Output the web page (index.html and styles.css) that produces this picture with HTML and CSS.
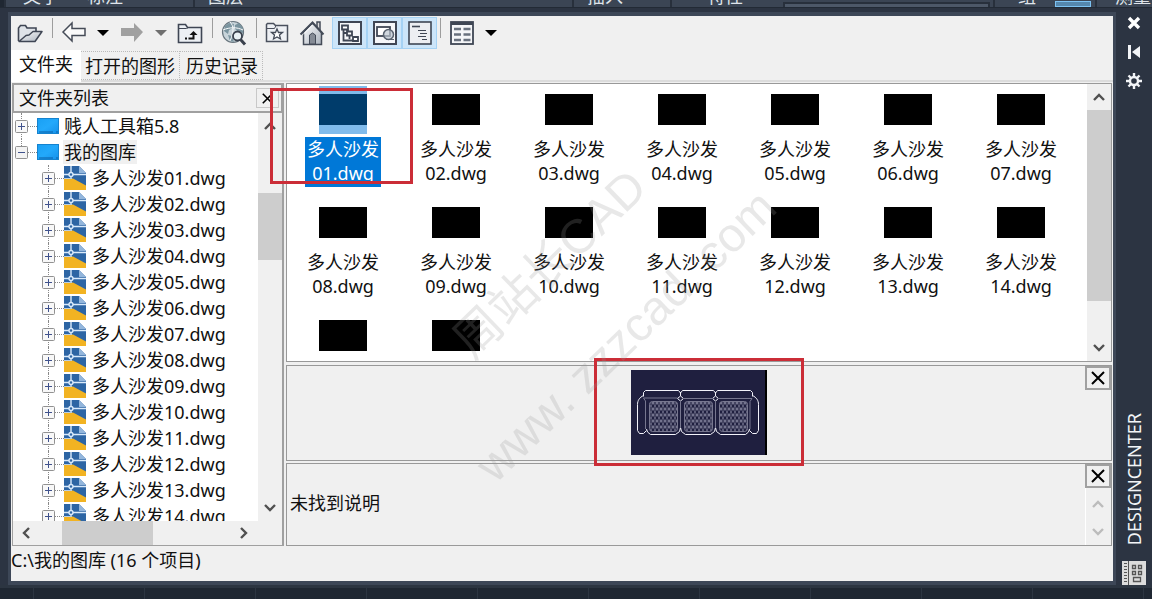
FILE: index.html
```html
<!DOCTYPE html>
<html lang="zh-CN">
<head>
<meta charset="utf-8">
<title>DESIGNCENTER</title>
<link rel="stylesheet" href="styles.css">
</head>
<body>
<svg class="defs" aria-hidden="true">
  <defs>
    <linearGradient id="blue" x1="0" y1="0" x2="1" y2="1"><stop offset="0" stop-color="#1aa0f4"/><stop offset=".5" stop-color="#23a9fb"/><stop offset="1" stop-color="#1591ea"/></linearGradient>
    <linearGradient id="metal" x1="0" y1="0" x2="1" y2="1"><stop offset="0" stop-color="#ffffff"/><stop offset="1" stop-color="#a9b1bc"/></linearGradient>
    <pattern id="hatch" width="4" height="6" patternUnits="userSpaceOnUse"><path d="M0 0L4 6M4 0L0 6M0 3H4" stroke="#9a9ab2" stroke-width=".6" fill="none"/></pattern>
    <symbol id="i-folder" viewBox="0 0 22 16"><rect x=".5" y=".5" width="21" height="15" fill="url(#blue)" stroke="#1583cf"/><path d="M2 14h14M19 14h2" stroke="#0b5fa5"/></symbol>
    <symbol id="i-dwg" viewBox="0 0 22 24"><path d="M0 0h15l7 7v17H0z" fill="#2d65a4"/><path d="M15 0v7h7z" fill="#93b6dc"/><path d="M0 12.500l9 0 13 7V24H0z" fill="#f2b322"/><path d="M7 0v12M0 8.500h22" stroke="#d9eafb" stroke-width="1.400" fill="none"/><path d="M0 12.500h8" stroke="#b9cfe4"/><circle cx="7" cy="8.500" r="2" fill="#2d65a4" stroke="#d9eafb" stroke-width="1.400"/></symbol>
    <symbol id="i-plus" viewBox="0 0 13 13"><rect x=".5" y=".5" width="12" height="12" rx="1" fill="#f8f8f8" stroke="#919191"/><path d="M3 6.500h7M6.500 3v7" stroke="#40528c"/></symbol>
    <symbol id="i-minus" viewBox="0 0 13 13"><rect x=".5" y=".5" width="12" height="12" rx="1" fill="#f3f3f3" stroke="#919191"/><path d="M3 6.500h7" stroke="#40528c"/></symbol>
    <symbol id="i-up" viewBox="0 0 12 8"><path d="M1 7l5-5 5 5" fill="none" stroke="currentColor" stroke-width="2.400"/></symbol>
    <symbol id="i-down" viewBox="0 0 12 8"><path d="M1 1l5 5 5-5" fill="none" stroke="currentColor" stroke-width="2.400"/></symbol>
    <symbol id="i-left" viewBox="0 0 8 12"><path d="M7 1L2 6l5 5" fill="none" stroke="currentColor" stroke-width="2.400"/></symbol>
    <symbol id="i-right" viewBox="0 0 8 12"><path d="M1 1l5 5-5 5" fill="none" stroke="currentColor" stroke-width="2.400"/></symbol>
    <symbol id="i-x" viewBox="0 0 14 14"><path d="M1 1l12 12M13 1L1 13" fill="none" stroke="currentColor" stroke-width="2"/></symbol>
    <symbol id="i-caret" viewBox="0 0 12 6"><path d="M0 0h12L6 6z" fill="currentColor"/></symbol>
  </defs>
</svg>

<header class="ribbon">
  <div class="rg rg-annotate"><span>文字</span><span>标注</span></div>
  <div class="rg rg-layer"><span>图层</span></div>
  <div class="rg rg-insert"><span>插入</span></div>
  <div class="rg rg-props"><span>特性</span><i class="combo"></i></div>
  <div class="rg rg-group"><span>组</span><i class="active-tool"></i></div>
  <div class="rg rg-measure"><span>测量</span></div>
</header>

<div class="palette">
  <main class="window">
    <div class="toolbar" role="toolbar">
      <button class="tool" aria-label="加载"><svg width="26" height="26" viewBox="0 0 26 26"><path d="M1.500 21V8l2-2.500h5L10 8h9v4" fill="#dfe3e8" stroke="#3f4654" stroke-width="1.600"/><path d="M2 21.500l7-6 3-.5 4-3.500h9L18 21.500z" fill="url(#metal)" stroke="#3f4654" stroke-width="1.500" stroke-linejoin="round"/></svg></button>
      <i class="sep"></i>
      <button class="tool" aria-label="上一页"><svg width="26" height="26" viewBox="0 0 26 26"><path d="M2 12l9-9v5.500h13v7H11V21z" fill="#fafafa" stroke="#454b57" stroke-width="1.500"/></svg></button>
      <button class="drop" aria-label="后退列表"><svg width="12" height="6"><use href="#i-caret"/></svg></button>
      <button class="tool" aria-label="下一页"><svg width="26" height="26" viewBox="0 0 26 26"><path d="M24 12l-9-9v5H2v8h13v6z" fill="#a0a0a0"/></svg></button>
      <button class="drop muted" aria-label="前进列表"><svg width="12" height="6"><use href="#i-caret"/></svg></button>
      <button class="tool" aria-label="上一级"><svg width="26" height="26" viewBox="0 0 26 26"><path d="M1.500 22.500V4.500h7l2 3h14v15z" fill="#edf0f4" stroke="#3f4654" stroke-width="1.600"/><path d="M1.500 8.500h8l2-1" fill="none" stroke="#3f4654"/><path d="M8 18.500h2M11.500 18.500h5v-4" stroke="#111" stroke-width="2" fill="none"/><path d="M12.500 15l4-4 4 4z" fill="#111"/></svg></button>
      <i class="sep"></i>
      <button class="tool" aria-label="搜索"><svg width="26" height="26" viewBox="0 0 26 26"><circle cx="12" cy="12" r="10.500" fill="#c8d4da" stroke="#68757e" stroke-width="1.200"/><path d="M4 6l4-3 5 1-1 4-4 2-1 4-4-3zM14 5l4-2 4 5 0 5-4-1-4-3zM7 15l4 1 2 6-4-1z" fill="#7a949f"/><path d="M9 2c4 4 4 10 0 19M2 10c7-3 14-3 20 0" fill="none" stroke="#f8fafb"/><circle cx="16.500" cy="16" r="4.500" fill="#e9f1f4" stroke="#3a414d" stroke-width="1.800"/><path d="M19.500 19.500l4.500 5" stroke="#3a414d" stroke-width="3"/></svg></button>
      <i class="sep"></i>
      <button class="tool tool-fav" aria-label="收藏夹"><svg width="26" height="26" viewBox="0 0 26 26"><path d="M2.500 21.500v-17l1-1h6l2 2h12v16z" fill="#eef0f4" stroke="#4a505d" stroke-width="1.500"/><path d="M2.500 8.500h8l1.500-3" fill="none" stroke="#4a505d"/><path d="M13 9l1.500 3.500h4L15.500 15l1 4-3.500-2-3.500 2 1-4-3-2.500h4z" fill="#fff" stroke="#444b58" stroke-width="1.300"/></svg></button>
      <button class="tool tool-home" aria-label="主页"><svg width="26" height="26" viewBox="0 0 26 26"><path d="M18 7V2h3v8" fill="#ddd" stroke="#444b58" stroke-width="1.500"/><path d="M4.500 12v12.500h18V12l-9-9z" fill="url(#metal)" stroke="#444b58" stroke-width="1.500"/><path d="M1.500 14.500L13.500 2.500l11 12" fill="none" stroke="#444b58" stroke-width="2"/><path d="M13.500 5L4 14.500" stroke="#fff"/><path d="M10.500 24v-9l3-2 3 2v9z" fill="#858b95" stroke="#444b58"/></svg></button>
      <button class="toggle" aria-pressed="true" aria-label="树状图切换"><svg width="24" height="24" viewBox="0 0 24 24"><rect x="1" y="1" width="22" height="22" fill="#f5f6f8" stroke="#3f4654" stroke-width="2"/><path d="M5.500 8v11.500h10M5.500 12h4M11.500 14v4" fill="none" stroke="#3f4654" stroke-width="1.800"/><path d="M4 4.500h6v4H4zM9 10.500h5v4H9zM15 16h5v4h-5z" fill="#fff" stroke="#3f4654" stroke-width="1.800"/></svg></button>
      <button class="toggle" aria-pressed="true" aria-label="预览"><svg width="24" height="24" viewBox="0 0 24 24"><rect x="1" y="1" width="22" height="22" fill="#f5f6f8" stroke="#3f4654" stroke-width="2"/><rect x="4" y="6" width="13" height="9" fill="#fff" stroke="#3f4654" stroke-width="1.800"/><circle cx="15.500" cy="13.500" r="5" fill="#bdc8d2" fill-opacity=".7" stroke="#57616e" stroke-width="1.500"/><path d="M13 18.500h8" stroke="#57616e"/></svg></button>
      <button class="toggle" aria-pressed="true" aria-label="说明"><svg width="24" height="24" viewBox="0 0 24 24"><rect x="1" y="1" width="22" height="22" fill="#eceef2" stroke="#3f4654" stroke-width="1.600"/><path d="M4 5.500h8" stroke="#3f4654" stroke-width="1.600"/><path d="M10 9.500h8M12 12.500h7M10 15.500h8M14 18.500h5" stroke="#3f4654" stroke-width="1.200"/></svg></button>
      <i class="sep"></i>
      <button class="tool" aria-label="视图"><svg width="24" height="24" viewBox="0 0 24 24"><rect x="1" y="1" width="22" height="22" fill="#f5f6f8" stroke="#3f4654" stroke-width="1.800"/><path d="M1 2.500h22" stroke="#3f4654" stroke-width="3"/><path d="M4 8h7M13.500 8h7M4 13.500h7M13.500 13.500h7M4 19h7M13.500 19h7" stroke="#69717e" stroke-width="2.400"/></svg></button>
      <button class="drop" aria-label="视图列表"><svg width="12" height="6"><use href="#i-caret"/></svg></button>
    </div>

    <div class="tabs" role="tablist">
      <button class="tab current" role="tab" aria-selected="true">文件夹</button>
      <button class="tab" role="tab">打开的图形</button>
      <button class="tab" role="tab">历史记录</button>
    </div>

    <div class="panes">
      <section class="folders">
        <div class="folders-head"><h2>文件夹列表</h2><button class="close small" aria-label="关闭"><svg width="11" height="11"><use href="#i-x"/></svg></button></div>
        <div class="folders-body">
          <ul class="tree" role="tree">
            <li class="root first"><svg class="box" width="13" height="13"><use href="#i-plus"/></svg><svg width="22" height="16"><use href="#i-folder"/></svg><span>贱人工具箱5.8</span></li>
            <li class="root"><svg class="box" width="13" height="13"><use href="#i-minus"/></svg><svg width="22" height="16"><use href="#i-folder"/></svg><span class="chosen">我的图库</span></li>
            <li class="leaf"><svg class="box" width="13" height="13"><use href="#i-plus"/></svg><svg width="22" height="24"><use href="#i-dwg"/></svg><span>多人沙发01.dwg</span></li>
            <li class="leaf"><svg class="box" width="13" height="13"><use href="#i-plus"/></svg><svg width="22" height="24"><use href="#i-dwg"/></svg><span>多人沙发02.dwg</span></li>
            <li class="leaf"><svg class="box" width="13" height="13"><use href="#i-plus"/></svg><svg width="22" height="24"><use href="#i-dwg"/></svg><span>多人沙发03.dwg</span></li>
            <li class="leaf"><svg class="box" width="13" height="13"><use href="#i-plus"/></svg><svg width="22" height="24"><use href="#i-dwg"/></svg><span>多人沙发04.dwg</span></li>
            <li class="leaf"><svg class="box" width="13" height="13"><use href="#i-plus"/></svg><svg width="22" height="24"><use href="#i-dwg"/></svg><span>多人沙发05.dwg</span></li>
            <li class="leaf"><svg class="box" width="13" height="13"><use href="#i-plus"/></svg><svg width="22" height="24"><use href="#i-dwg"/></svg><span>多人沙发06.dwg</span></li>
            <li class="leaf"><svg class="box" width="13" height="13"><use href="#i-plus"/></svg><svg width="22" height="24"><use href="#i-dwg"/></svg><span>多人沙发07.dwg</span></li>
            <li class="leaf"><svg class="box" width="13" height="13"><use href="#i-plus"/></svg><svg width="22" height="24"><use href="#i-dwg"/></svg><span>多人沙发08.dwg</span></li>
            <li class="leaf"><svg class="box" width="13" height="13"><use href="#i-plus"/></svg><svg width="22" height="24"><use href="#i-dwg"/></svg><span>多人沙发09.dwg</span></li>
            <li class="leaf"><svg class="box" width="13" height="13"><use href="#i-plus"/></svg><svg width="22" height="24"><use href="#i-dwg"/></svg><span>多人沙发10.dwg</span></li>
            <li class="leaf"><svg class="box" width="13" height="13"><use href="#i-plus"/></svg><svg width="22" height="24"><use href="#i-dwg"/></svg><span>多人沙发11.dwg</span></li>
            <li class="leaf"><svg class="box" width="13" height="13"><use href="#i-plus"/></svg><svg width="22" height="24"><use href="#i-dwg"/></svg><span>多人沙发12.dwg</span></li>
            <li class="leaf"><svg class="box" width="13" height="13"><use href="#i-plus"/></svg><svg width="22" height="24"><use href="#i-dwg"/></svg><span>多人沙发13.dwg</span></li>
            <li class="leaf"><svg class="box" width="13" height="13"><use href="#i-plus"/></svg><svg width="22" height="24"><use href="#i-dwg"/></svg><span>多人沙发14.dwg</span></li>
          </ul>
          <div class="vbar tree-bar"><button aria-label="向上"><svg width="12" height="8"><use href="#i-up"/></svg></button><div class="track"><i class="thumb"></i></div><button aria-label="向下"><svg width="12" height="8"><use href="#i-down"/></svg></button></div>
        </div>
        <div class="hbar"><button aria-label="向左"><svg width="8" height="12"><use href="#i-left"/></svg></button><div class="track"><i class="thumb"></i></div><button aria-label="向右"><svg width="8" height="12"><use href="#i-right"/></svg></button></div>
      </section>

      <div class="content">
        <section class="files">
          <ul class="grid">
            <li class="file picked"><i class="pic"></i><span>多人沙发<br>01.dwg</span></li>
            <li class="file"><i class="pic"></i><span>多人沙发<br>02.dwg</span></li>
            <li class="file"><i class="pic"></i><span>多人沙发<br>03.dwg</span></li>
            <li class="file"><i class="pic"></i><span>多人沙发<br>04.dwg</span></li>
            <li class="file"><i class="pic"></i><span>多人沙发<br>05.dwg</span></li>
            <li class="file"><i class="pic"></i><span>多人沙发<br>06.dwg</span></li>
            <li class="file"><i class="pic"></i><span>多人沙发<br>07.dwg</span></li>
            <li class="file"><i class="pic"></i><span>多人沙发<br>08.dwg</span></li>
            <li class="file"><i class="pic"></i><span>多人沙发<br>09.dwg</span></li>
            <li class="file"><i class="pic"></i><span>多人沙发<br>10.dwg</span></li>
            <li class="file"><i class="pic"></i><span>多人沙发<br>11.dwg</span></li>
            <li class="file"><i class="pic"></i><span>多人沙发<br>12.dwg</span></li>
            <li class="file"><i class="pic"></i><span>多人沙发<br>13.dwg</span></li>
            <li class="file"><i class="pic"></i><span>多人沙发<br>14.dwg</span></li>
            <li class="file"><i class="pic"></i></li>
            <li class="file"><i class="pic"></i></li>
          </ul>
          <div class="vbar file-bar"><button aria-label="向上"><svg width="12" height="8"><use href="#i-up"/></svg></button><div class="track"><i class="thumb"></i></div><button aria-label="向下"><svg width="12" height="8"><use href="#i-down"/></svg></button></div>
        </section>

        <section class="preview">
          <div class="stage">
            <svg width="136" height="85" viewBox="0 0 136 85" role="img" aria-label="沙发">
              <rect width="136" height="85" fill="#1f1f3f"/><rect x="134" width="2" height="85" fill="#000"/>
              <g fill="none" stroke="#f2f2fa" stroke-width="1">
                <path d="M12.500 26.500v-4l2-2h33l2 2.500 2-2.500h31l2 2.500 2-2.500h33l2 2v4"/>
                <path d="M12.500 25.500c-4 2-6 5-6 9v26l2 3h4l3-3M121.500 25.500c4 2 6 5 6 9v26l-2 3h-4l-3-3"/>
                <path d="M15.500 59l1 3 3 2.500h25l4-3 1-4 1 4 4 3h25l4-3 1-4 1 4 4 3h25l3-2.500 1-3"/>
                <path d="M49.500 22v4l-3 2.500 3 2.500 3-2.500-3-2.500M84.500 22v4l-3 2.500 3 2.500 3-2.500-3-2.500"/>
              </g>
              <g fill="none" stroke="#77778f"><path d="M14.500 59V31l-2-3h34M52 28.500h30M87 28.500h34l-2 3V59M49.500 31v27M84.500 31v27"/><rect x="18.500" y="31.500" width="28" height="30" rx="3" fill="url(#hatch)"/><rect x="53.500" y="31.500" width="28" height="30" rx="3" fill="url(#hatch)"/><rect x="88.500" y="31.500" width="28" height="30" rx="3" fill="url(#hatch)"/></g>
            </svg>
            <i class="mark mark-preview"></i>
          </div>
          <button class="close" aria-label="关闭预览"><svg width="14" height="14"><use href="#i-x"/></svg></button>
        </section>

        <section class="describe">
          <p>未找到说明</p>
          <div class="describe-side">
            <button class="close" aria-label="关闭说明"><svg width="14" height="14"><use href="#i-x"/></svg></button>
            <div class="vbar idle"><button disabled aria-label="向上"><svg width="12" height="8"><use href="#i-up"/></svg></button><button disabled aria-label="向下"><svg width="12" height="8"><use href="#i-down"/></svg></button></div>
          </div>
        </section>
        <i class="mark mark-file"></i>
      </div>
    </div>
    <footer class="status">C:\我的图库 (16 个项目)</footer>
  </main>

  <aside class="titlebar">
    <button aria-label="关闭"><svg width="14" height="14" viewBox="0 0 14 14"><path d="M2 2l10 10M12 2L2 12" stroke="#fff" stroke-width="3.400"/></svg></button>
    <button aria-label="自动隐藏"><svg width="14" height="14" viewBox="0 0 14 14"><path d="M1 0h3v14H1zM13 1v12L5 7z" fill="#f2f4f7"/></svg></button>
    <button aria-label="特性"><svg width="16" height="16" viewBox="0 0 16 16"><path d="M8 0v16M0 8h16M2.500 2.500l11 11M13.500 2.500l-11 11" stroke="#f2f4f7" stroke-width="2.400"/><circle cx="8" cy="8" r="4" fill="#2c3442" stroke="#f2f4f7" stroke-width="2.400"/></svg></button>
    <h1>DESIGNCENTER</h1>
    <svg class="app" width="24" height="24" viewBox="0 0 24 24"><rect width="24" height="24" fill="#dcdcdc"/><path d="M6.500 0v24" stroke="#555"/><path d="M2 2.500h3M2 5.500h3M2 8.500h3M2 11.500h3M2 14.500h3M2 17.500h3M2 20.500h3" stroke="#555"/><path d="M10.500 4.500h3v3h-3zM16.500 4.500h3v3h-3zM10.500 10.500h3v3h-3zM16.500 10.500h3v3h-3zM11.500 16.500h7v4h-7z" fill="none" stroke="#555" stroke-width="1.300"/></svg>
  </aside>
</div>

<div class="canvas-edge"></div>
<div class="watermark" aria-hidden="true"><p class="wm-name">周站长CAD</p><p class="wm-site">www. zzzcad. com</p></div>
</body>
</html>
```

FILE: styles.css
```css
* { box-sizing: border-box; }

body {
  margin: 0;
  height: 100vh;
  display: flex;
  flex-direction: column;
  position: relative;
  overflow: hidden;
  background: #1f2732;
  color: #111;
  font: 18px/24px "Noto Sans", "Noto Sans CJK SC", sans-serif;
}

ul, p, h1, h2 { margin: 0; padding: 0; font: inherit; list-style: none; }
button { margin: 0; padding: 0; border: 0; background: none; color: inherit; font: inherit; display: flex; align-items: center; justify-content: center; }
svg { display: block; flex: none; }
.defs { position: absolute; width: 0; height: 0; }

/* ribbon behind the palette */
.ribbon { flex: none; display: flex; height: 7px; margin-left: 4px; background: #3b4554; color: #dfe4ea; overflow: hidden; }
.rg { display: flex; align-items: flex-end; gap: 28px; border-left: 2px solid #28303c; }
.rg span { line-height: 22px; flex: none; }
.rg-annotate { flex: 0 1 189px; padding-left: 17px; }
.rg-layer { flex: 1 1 379px; padding-left: 13px; }
.rg-insert { flex: 0 1 98px; padding-left: 13px; }
.rg-props { flex: 0 1 323px; padding-left: 35px; gap: 40px; }
.rg-group { flex: 0 1 102px; padding-left: 23px; gap: 19px; }
.rg-measure { flex: 0 1 57px; padding-left: 18px; }
.combo { flex: 1; height: 5px; margin-right: 3px; background: #4d5868; border: 2px solid #28303c; border-bottom: 0; }
.active-tool { width: 36px; height: 6px; background: #5587ad; border: 1px solid #7cc2f2; }

/* palette frame */
.palette { flex: 1; min-height: 0; display: flex; background: #2c3442; border-top: 1px solid #222a35; border-bottom: 3px solid #2c3541; }
.window {
  flex: 1;
  min-width: 0;
  display: flex;
  flex-direction: column;
  margin-top: 4px;
  border: solid #3d4757;
  border-width: 4px 3px 4px 3px;
  margin-left: 8px;
  background: #f0f0f0;
}

.toolbar { flex: none; display: flex; align-items: center; height: 33px; }
.tool { width: 38px; height: 32px; }
.tool-fav { width: 36px; }
.tool-home { width: 37px; padding-right: 4px; }
.drop { width: 20px; height: 32px; color: #000; }
.drop.muted { color: #6f6f6f; }
.sep { width: 1px; height: 20px; margin: 0 2px 10px 3px; background: #9d9d9d; }
.toggle { width: 35px; height: 32px; background: #cce5f9; border: 1px solid #a5d2f4; }

.tabs { flex: none; display: flex; align-items: flex-end; height: 33px; border-bottom: 2px solid #dcdcdc; }
.tab { height: 29px; padding: 0 4px; border: 1px dotted #bbb; border-left: 0; }
.tab:last-child { padding: 0 4px 0 6px; }
.tab.current { height: 32px; padding: 0 7px 4px; margin-bottom: -2px; background: #fff; border: 1px solid #fff; }

/* panes */
.panes { flex: 1; min-height: 0; display: flex; gap: 2px; padding: 1px 1px 0 1px; }
.folders { flex: 0 0 272px; display: flex; flex-direction: column; border: 1px solid #a0a0a0; border-right-width: 2px; }
.folders-head { flex: none; display: flex; align-items: center; justify-content: space-between; height: 29px; padding: 0 2px 0 5px; border: solid #a0a0a0; border-width: 1px 1px 2px 1px; }
.folders-body { flex: 1; min-height: 0; display: flex; background: #fff; }
.tree { flex: 1; min-width: 0; overflow: hidden; }
.tree li { display: flex; align-items: center; height: 26px; position: relative; white-space: nowrap; }
.tree li::before { content: ""; position: absolute; top: 0; bottom: 0; border-left: 1px dotted #888; }
.tree li::after { content: ""; position: absolute; top: 13px; width: 9px; border-top: 1px dotted #888; }
.tree .box { position: relative; z-index: 1; }
.root { padding-left: 2px; }
.root::before { left: 8px; }
.root::after { left: 15px; }
.root:not(.first)::before { bottom: 13px; }
.root .box { margin-right: 9px; }
.root span { margin-left: 4px; padding: 0 1px; }
.chosen { background: #f0f0f0; }
.leaf { padding-left: 29px; }
.leaf::before { left: 35px; }
.leaf::after { left: 42px; }
.leaf .box { margin-right: 9px; }
.leaf span { margin-left: 6px; }

/* scroll bars */
.vbar { flex: none; width: 24px; display: flex; flex-direction: column; background: #f0f0f0; color: #505050; }
.vbar button { flex: none; height: 26px; width: 100%; }
.track { flex: 1; display: flex; min-width: 0; min-height: 0; }
.vbar .track { flex-direction: column; }
.thumb { background: #cdcdcd; }
.tree-bar .track { padding-top: 54px; }
.tree-bar .thumb { height: 67px; }
.file-bar .thumb { height: 85%; }
.idle { flex: 1; justify-content: space-between; color: #bcbcbc; border-left: 1px solid #fff; padding-top: 3px; }
.hbar { flex: none; height: 24px; display: flex; padding-right: 25px; color: #505050; }
.hbar button { width: 26px; height: 24px; }
.hbar .track { padding-left: 23px; }
.hbar .thumb { width: 91px; }

.close { flex: none; width: 26px; height: 24px; border: 2px solid #a0a0a0; color: #000; }
.close.small { width: 23px; height: 20px; border: 1px solid #c8c8c8; }

.content { flex: 1; min-width: 0; display: flex; flex-direction: column; gap: 3px; position: relative; }
.files { flex: 1; min-height: 0; display: flex; background: #fff; border: 1px solid #999; }
.grid { flex: 1; display: grid; grid-template-columns: repeat(auto-fill, 113px); grid-auto-rows: 113px; padding-top: 2px; overflow: hidden; }
.file { display: flex; flex-direction: column; align-items: center; gap: 3px; padding-right: 1px; text-align: center; }
.pic { flex: none; width: 48px; height: 48px; border: solid #fff; border-width: 8px 0 9px; background: #000; }
.file span { padding: 0 2px 2px; }
.picked .pic { border-color: #80bbeb; background: #003c6b; }
.picked span { background: #0078d7; color: #fff; }

.preview { flex: none; display: flex; border: 1px solid #999; }
.stage { flex: 1; display: flex; justify-content: center; padding: 4px 0 5px 26px; position: relative; }
.describe { flex: none; display: flex; justify-content: space-between; height: 83px; margin-top: -1px; border: 1px solid #999; }
.describe p { padding: 27px 3px 0; }
.describe-side { flex: none; width: 26px; display: flex; flex-direction: column; }

/* call-out frames */
.mark { position: absolute; border: 3px solid #cb2d37; pointer-events: none; }
.mark-file { left: -16px; top: 5px; width: 143px; height: 96px; }
.mark-preview { left: calc(50% - 92px); top: -8px; bottom: -6px; width: 210px; }

.status { flex: none; height: 35px; padding-top: 2px; }

/* vertical title bar */
.titlebar { flex: none; width: 36px; display: flex; flex-direction: column; align-items: center; padding-top: 3px; }
.titlebar button { width: 24px; height: 24px; margin-bottom: 5px; }
.titlebar h1 { margin-top: auto; writing-mode: vertical-rl; transform: rotate(180deg); color: #f2f4f7; }
.app { margin-top: 16px; }

.canvas-edge { flex: none; height: 11px; background: repeating-linear-gradient(90deg, #1f2732 0 33px, #2c3541 33px 34px, #1f2732 34px 111px); }

/* watermark */
.watermark { position: absolute; left: 620px; top: 322px; color: rgba(150, 150, 150, .22); white-space: nowrap; pointer-events: none; }
.watermark p { position: absolute; transform: translate(-50%, -50%) rotate(-44deg); }
.wm-name { left: -70px; top: -58px; font: 48px/56px "Liberation Sans", "Noto Sans CJK SC", sans-serif; }
.wm-site { left: 6px; top: 14px; font: 48px/56px "Liberation Sans", sans-serif; }
```
